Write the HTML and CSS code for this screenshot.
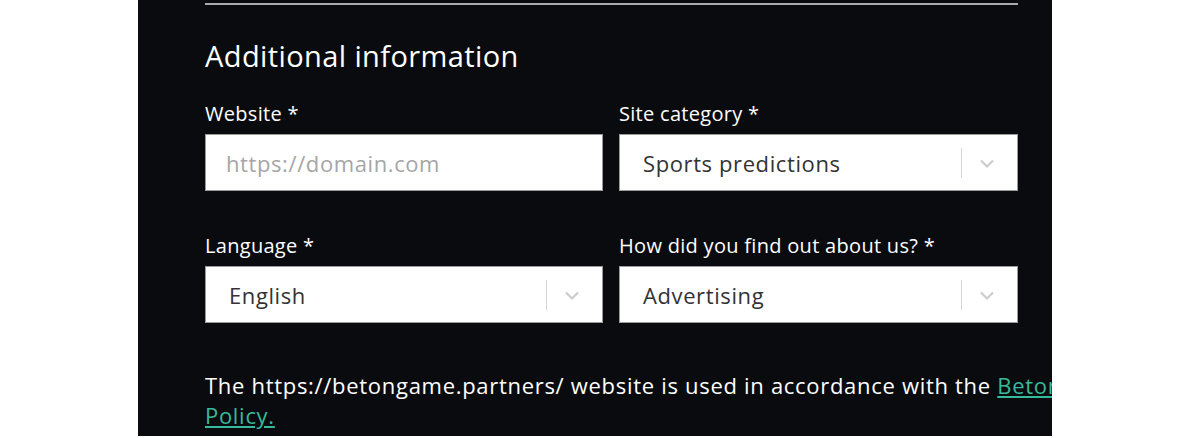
FILE: index.html
```html
<!DOCTYPE html>
<html lang="en">
<head>
    <meta charset="UTF-8">
    <meta name="viewport" content="width=device-width, initial-scale=1.0">
    <title>Additional information</title>
    <link rel="stylesheet" href="styles.css">
</head>
<body>
    <div class="panel">
        <div class="prev-field"></div>

        <h2>Additional information</h2>

        <div class="grid">
            <div class="field">
                <label for="website">Website *</label>
                <input type="text" id="website" placeholder="https://domain.com">
            </div>
            <div class="field">
                <label>Site category *</label>
                <div class="select">
                    <span class="value">Sports predictions</span>
                    <span class="sep"></span>
                    <svg class="chev" width="20" height="20" viewBox="0 0 20 20"><path d="M4 7.5l6 6 6-6" fill="none" stroke="#ccc" stroke-width="2.2"/></svg>
                </div>
            </div>
            <div class="field">
                <label>Language *</label>
                <div class="select">
                    <span class="value">English</span>
                    <span class="sep"></span>
                    <svg class="chev" width="20" height="20" viewBox="0 0 20 20"><path d="M4 7.5l6 6 6-6" fill="none" stroke="#ccc" stroke-width="2.2"/></svg>
                </div>
            </div>
            <div class="field">
                <label>How did you find out about us? *</label>
                <div class="select">
                    <span class="value">Advertising</span>
                    <span class="sep"></span>
                    <svg class="chev" width="20" height="20" viewBox="0 0 20 20"><path d="M4 7.5l6 6 6-6" fill="none" stroke="#ccc" stroke-width="2.2"/></svg>
                </div>
            </div>
        </div>

        <p class="note"><span class="line">The https://betongame.partners/ website is used in accordance with the <a href="#">Betongame Privacy</a></span><br><a href="#">Policy.</a></p>
    </div>
</body>
</html>
```

FILE: styles.css
```css
body { margin: 0; background: #fff; font-family: "Open Sans", "Noto Sans", sans-serif; }
.panel { margin-left: 138px; width: 914px; height: 436px; box-sizing: border-box; padding: 3px 34px 0 67px; background: #0a0b0f; color: #fff; overflow: hidden; }
.prev-field { height: 2px; background: #a9aaad; }
h2 { margin: 31px 0 0; font-size: 29px; line-height: 40px; font-weight: 400; letter-spacing: 0.4px; }
.grid { display: grid; grid-template-columns: 398px 399px; column-gap: 16px; row-gap: 42px; margin-top: 25px; }
.field label { display: block; font-size: 20px; line-height: 26px; letter-spacing: 0.3px; margin-bottom: 7px; }
input, .select { width: 100%; height: 57px; box-sizing: border-box; border: 1px solid #9a9a9a; background: #fff; font-family: inherit; font-size: 22px; letter-spacing: 0.6px; color: #333; }
input { padding: 0 20px; outline: none; }
input::placeholder { color: #a6a6a6; }
.select { display: flex; align-items: center; padding: 0 20px 0 23px; }
.select .value { flex: 1; }
.sep { width: 1px; height: 30px; background: #d6d6d6; margin-right: 15px; }
.note { margin: 47px 0 0; font-size: 22px; line-height: 30px; letter-spacing: 0.7px; }
.note .line { white-space: nowrap; }
.note a { color: #37b99b; }
```
